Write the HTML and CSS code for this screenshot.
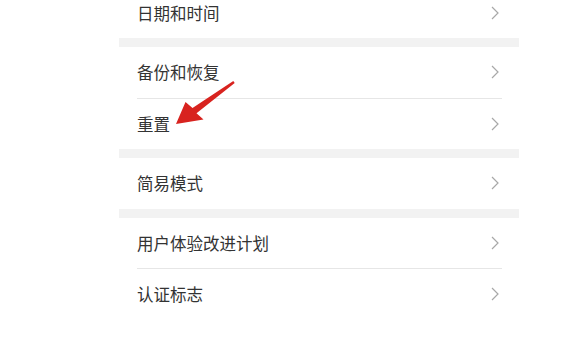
FILE: index.html
```html
<!DOCTYPE html>
<html lang="zh-CN">
<head>
<meta charset="utf-8">
<link rel="stylesheet" href="styles.css">
</head>
<body>
<div class="page">
  <div class="list">
    <div class="group first">
      <div class="row"><span class="label">日期和时间</span><svg class="chev" viewBox="0 0 8 14"><path d="M1 1 L7 7 L1 13" /></svg></div>
    </div>
    <div class="band"></div>
    <div class="group">
      <div class="row"><span class="label">备份和恢复</span><svg class="chev" viewBox="0 0 8 14"><path d="M1 1 L7 7 L1 13" /></svg></div>
      <div class="divider"></div>
      <div class="row"><span class="label">重置</span><svg class="chev" viewBox="0 0 8 14"><path d="M1 1 L7 7 L1 13" /></svg></div>
    </div>
    <div class="band"></div>
    <div class="group">
      <div class="row"><span class="label">简易模式</span><svg class="chev" viewBox="0 0 8 14"><path d="M1 1 L7 7 L1 13" /></svg></div>
    </div>
    <div class="band"></div>
    <div class="group">
      <div class="row"><span class="label">用户体验改进计划</span><svg class="chev" viewBox="0 0 8 14"><path d="M1 1 L7 7 L1 13" /></svg></div>
      <div class="divider"></div>
      <div class="row"><span class="label">认证标志</span><svg class="chev" viewBox="0 0 8 14"><path d="M1 1 L7 7 L1 13" /></svg></div>
    </div>
  </div>
  <svg class="arrow" viewBox="0 0 585 337" width="585" height="337">
    <polygon points="233.3,81 192.5,108 185.5,102 176,124 203.5,119.5 196.5,113.2 234.7,83" />
  </svg>
</div>
</body>
</html>
```
FILE: styles.css
```css
html, body {
  margin: 0;
  padding: 0;
  background: #ffffff;
}
.page {
  position: relative;
  width: 585px;
  height: 337px;
  overflow: hidden;
}
.list {
  margin-left: 119px;
  width: 400px;
  margin-top: -13px;
  font-family: "Noto Sans CJK SC", "Noto Sans", sans-serif;
}
.row {
  height: 50.5px;
  display: flex;
  align-items: center;
  justify-content: space-between;
  padding: 0 20px 0 18px;
}
.label {
  font-size: 16.5px;
  color: #333333;
  letter-spacing: 0;
}
.chev {
  width: 8px;
  height: 14px;
  fill: none;
  stroke: #a8a8a8;
  stroke-width: 1.2;
}
.divider {
  height: 1px;
  background: #e6e6e6;
  margin: 0 17px 0 18px;
}
.band {
  height: 9px;
  background: #f2f2f2;
}
.group.first .row {
  height: 51px;
}
.arrow {
  position: absolute;
  left: 0;
  top: 0;
  pointer-events: none;
}
.arrow polygon {
  fill: #d8231f;
}
```
